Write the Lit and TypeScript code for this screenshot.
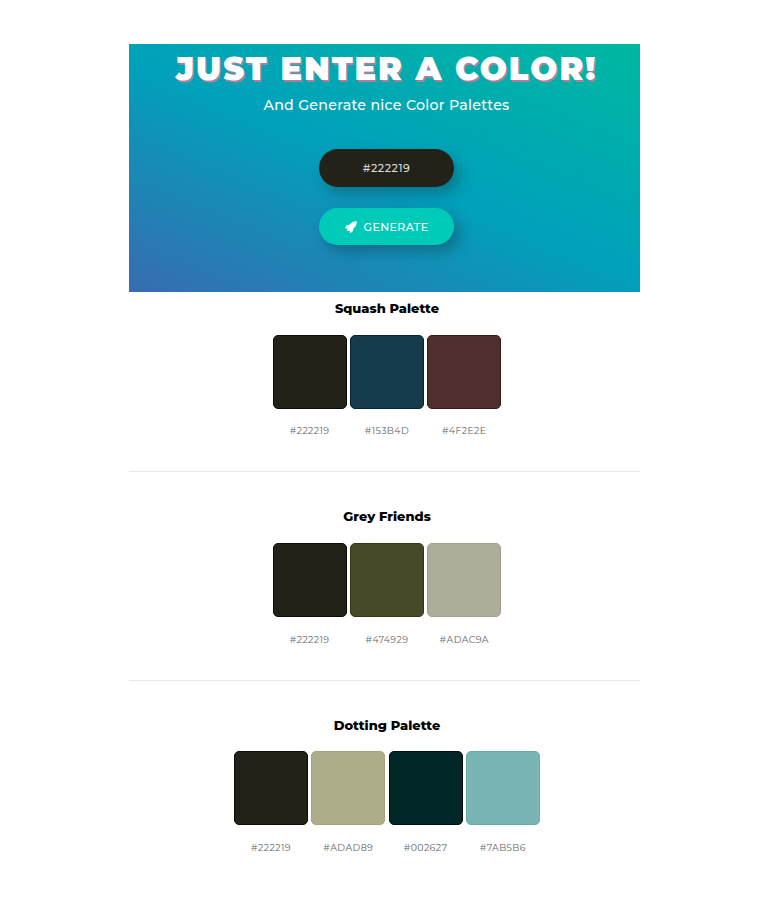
import { LitElement, html, css } from "lit";
import { customElement, property } from "lit/decorators.js";
import { styleMap } from "lit/directives/style-map.js";

interface Palette {
  name: string;
  colors: { hex: string; edge: string }[];
}

const palettes: Palette[] = [
  {
    name: "Squash Palette",
    colors: [
      { hex: "#222219", edge: "#0b0b05" },
      { hex: "#153B4D", edge: "#062334" },
      { hex: "#4F2E2E", edge: "#3b1818" },
    ],
  },
  {
    name: "Grey Friends",
    colors: [
      { hex: "#222219", edge: "#0b0b05" },
      { hex: "#474929", edge: "#353713" },
      { hex: "#ADAC9A", edge: "#a3a28e" },
    ],
  },
  {
    name: "Dotting Palette",
    colors: [
      { hex: "#222219", edge: "#0b0b05" },
      { hex: "#ADAD89", edge: "#a3a37c" },
      { hex: "#002627", edge: "#000c0d" },
      { hex: "#7AB5B6", edge: "#69aaab" },
    ],
  },
];

@customElement("palette-section")
export class PaletteSection extends LitElement {
  @property({ attribute: false }) palette!: Palette;

  static styles = css`
    :host { display: block; }
    .name {
      margin: 0;
      height: 18px;
      font-size: 13px;
      line-height: 18px;
      font-weight: 800;
      letter-spacing: 0;
      color: #000;
      text-align: center;
    }
    .row { display: flex; justify-content: center; gap: 3.3px; margin: 17.5px 0.2px 0 0; }
    .item { width: 74px; }
    .swatch { box-sizing: border-box; height: 74px; border: 1.4px solid; border-radius: 5px; }
    .code {
      margin-top: 14.6px;
      height: 16px;
      line-height: 16px;
      font-size: 9.4px;
      letter-spacing: 0.4px;
      color: #666;
      text-align: center;
      white-space: nowrap;
    }
  `;

  render() {
    return html`
      <h2 class="name">${this.palette.name}</h2>
      <div class="row">
        ${this.palette.colors.map(
          (c) => html`<div class="item">
            <div class="swatch" style=${styleMap({ background: c.hex, borderColor: c.edge })}></div>
            <div class="code">${c.hex}</div>
          </div>`
        )}
      </div>
    `;
  }
}

@customElement("app-root")
export class AppRoot extends LitElement {
  static styles = css`
    :host {
      display: block;
      box-sizing: border-box;
      height: 900px;
      padding: 44px 128px 0 129px;
      overflow: hidden;
      background: #fff;
      font-family: Montserrat, Inter, sans-serif;
    }
    .hero {
      box-sizing: border-box;
      height: 248px;
      padding: 5px 0 0 4px;
      display: flex;
      flex-direction: column;
      align-items: center;
      background: linear-gradient(23deg, #386cb0 0%, #00a1bb 50%, #00b8a0 100%);
      color: #fff;
    }
    .title {
      margin: 0;
      height: 40px;
      line-height: 40px;
      font-size: 32px;
      font-weight: 900;
      letter-spacing: 2px;
      white-space: nowrap;
      text-shadow: 1px 1.6px 0 #a6819b;
    }
    .sub {
      margin: 5px 0 0;
      height: 22px;
      line-height: 22px;
      font-size: 14.2px;
      font-weight: 500;
      letter-spacing: 0.28px;
      white-space: nowrap;
    }
    .pill {
      box-sizing: border-box;
      width: 135px;
      height: 37.5px;
      border-radius: 19px;
      display: flex;
      align-items: center;
      justify-content: center;
      font-size: 11px;
      font-weight: 500;
      letter-spacing: 0.55px;
      white-space: nowrap;
      box-shadow: 6px 7px 13px rgba(20, 60, 80, 0.4);
    }
    .field { margin-top: 33.3px; background: #222219; color: #dcdcda; }
    .go { margin-top: 21px; background: #00cbb9; gap: 7px; letter-spacing: 0.4px; }
    .rocket { width: 12px; height: 12px; display: block; }
    .list { padding: 7px 0 0 5px; }
    .rule { height: 1px; margin: 32.4px 0 35px -5px; background: #e9e9ea; }
  `;

  render() {
    return html`
      <header class="hero">
        <h1 class="title">JUST ENTER A COLOR!</h1>
        <p class="sub">And Generate nice Color Palettes</p>
        <div class="pill field">#222219</div>
        <div class="pill go">
          <svg class="rocket" viewBox="0 0 24 24" fill="currentColor">
            <path d="M23.6.4C16.8.2 12.6 2.6 9.2 7.4L4.4 7.8 3.4 8.5.2 13.6l.5.9 4.4.1-1.7 3.2 2.8 2.8 3.2-1.7.1 4.4.9.5 5.1-3.2.7-1 .4-4.8C21.4 11.4 23.8 7.2 23.6.4z" />
          </svg>
          <span>GENERATE</span>
        </div>
      </header>
      <main class="list">
        ${palettes.map(
          (p, i) => html`${i ? html`<div class="rule"></div>` : null}
            <palette-section .palette=${p}></palette-section>`
        )}
      </main>
    `;
  }
}
